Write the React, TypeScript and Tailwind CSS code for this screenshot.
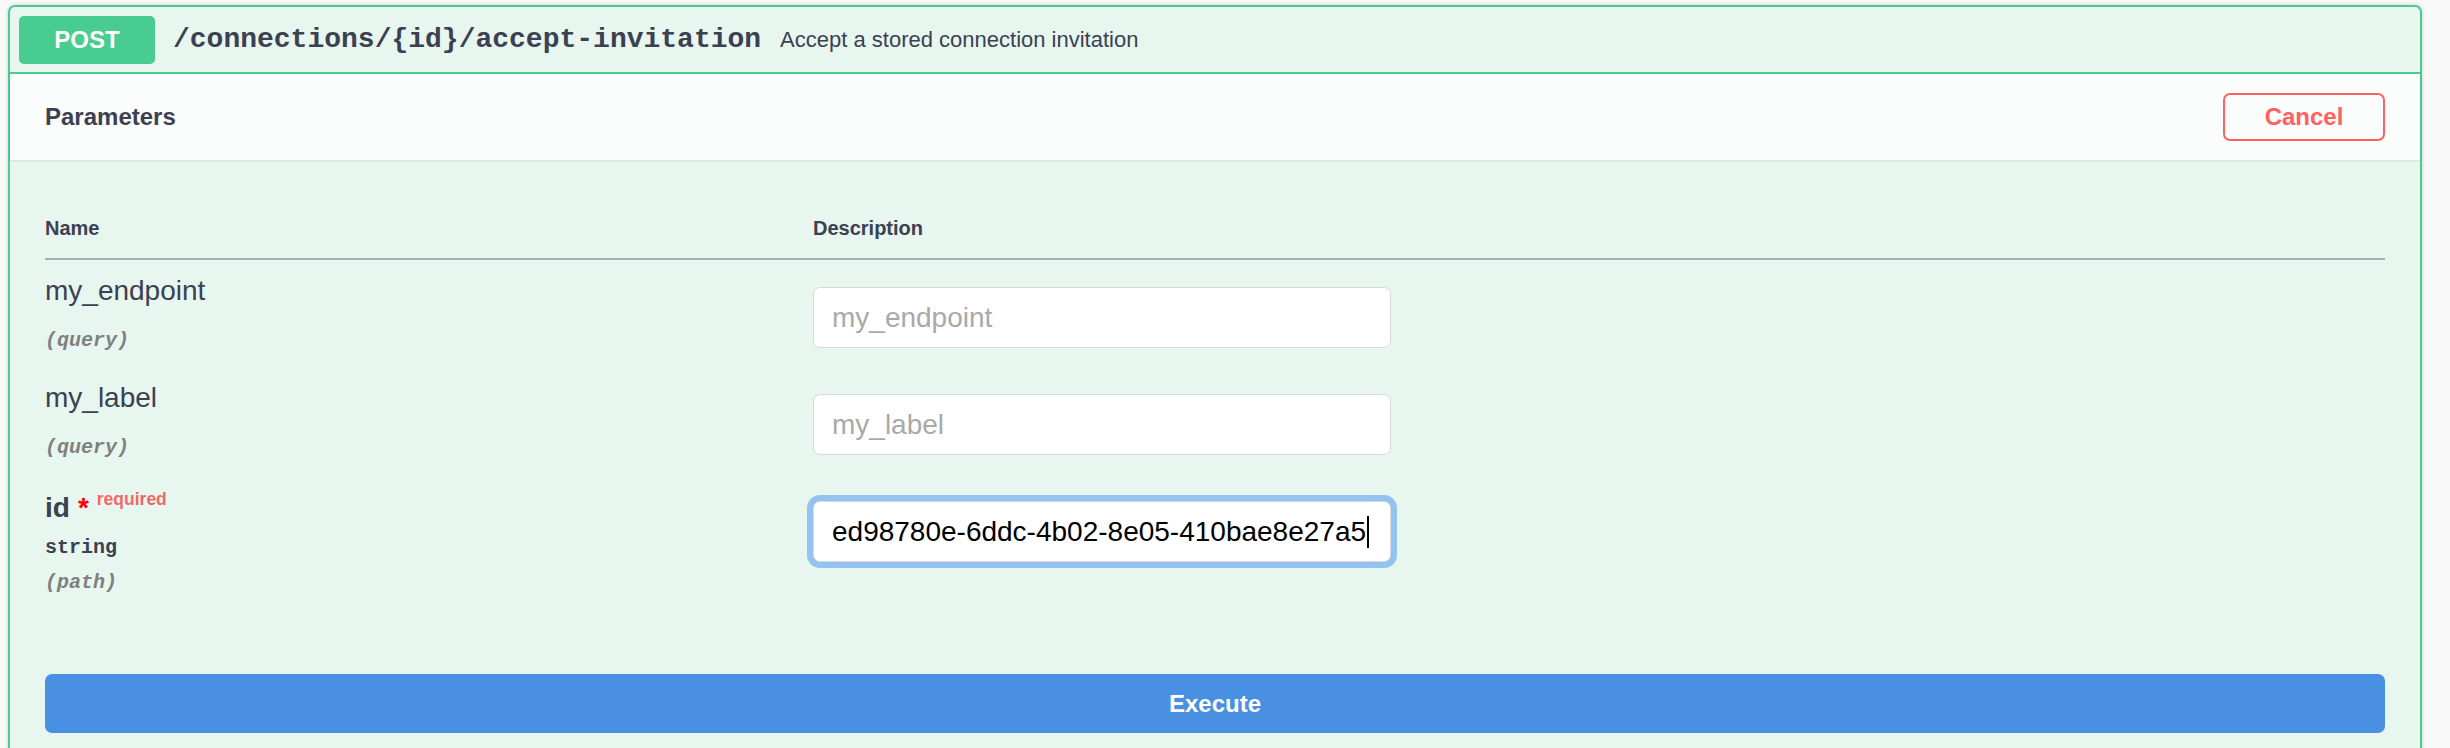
import React from 'react';

interface Param {
  name: string;
  location: string;
  type?: string;
  required?: boolean;
  value?: string;
}

const params: Param[] = [
  { name: 'my_endpoint', location: 'query' },
  { name: 'my_label', location: 'query' },
  { name: 'id', location: 'path', type: 'string', required: true, value: 'ed98780e-6ddc-4b02-8e05-410bae8e27a5' },
];

const mono = "font-['Liberation_Mono','Courier_New',monospace]";

const ParamRow: React.FC<{ param: Param }> = ({ param }) => {
  return (
    <div className="grid grid-cols-[768px_1fr] pt-[15px] pb-[15px]">
      <div className="flex flex-col">
        <div className={`text-[28px] leading-[32px] ${param.required ? 'mt-[3px] font-bold' : ''}`}>
          {param.name}
          {param.required && (
            <>
              <span className="ml-[8px] text-[#ff0000]">*</span>
              <span className="relative -top-[12px] pl-[8px] text-[17.5px] font-bold text-[rgba(255,0,0,0.6)]">
                required
              </span>
            </>
          )}
        </div>
        {param.type && (
          <div className={`${mono} mt-[9px] text-[20px] leading-[23px] font-bold`}>{param.type}</div>
        )}
        <div
          className={`${mono} text-[20px] leading-[23px] font-bold italic text-[#808080] ${
            param.type ? 'mt-[12px]' : 'mt-[22px]'
          }`}
        >
          ({param.location})
        </div>
      </div>
      <div className="pt-[12px]">
        {param.value ? (
          <div className="flex h-[61px] w-[578px] items-center rounded-[7px] border border-[#d9d9d9] bg-white pl-[18px] text-[28px] text-black shadow-[0_0_0_6px_#93c4f0]">
            <span>{param.value}</span>
            <span className="ml-[1px] h-[32px] w-[1.5px] bg-black" />
          </div>
        ) : (
          <input
            placeholder={param.name}
            className="h-[61px] w-[578px] rounded-[7px] border border-[#d9d9d9] bg-white pl-[18px] text-[28px] text-black outline-none placeholder:text-[#a9a9a9]"
          />
        )}
      </div>
    </div>
  );
};

export default function App() {
  return (
    <div className="h-[748px] overflow-hidden bg-[#f9f9f9] font-['Liberation_Sans',Arial,sans-serif] text-[#3b4151]">
      <div className="ml-[8px] mt-[5px] w-[2414px] rounded-t-[7px] border-2 border-b-0 border-[#49cc90] bg-[#e8f6f0] shadow-[0_0_4px_rgba(0,0,0,0.19)]">
        {/* summary */}
        <div className="flex h-[67px] items-center border-b-2 border-[#49cc90] pl-[9px]">
          <span className="flex h-[48px] w-[136px] items-center justify-center rounded-[5px] bg-[#49cc90] text-[24px] font-bold text-white">
            POST
          </span>
          <span className={`${mono} ml-[18px] text-[28px] font-bold`}>/connections/{'{id}'}/accept-invitation</span>
          <span className="ml-[19px] text-[22px]">Accept a stored connection invitation</span>
        </div>

        {/* section header */}
        <div className="flex h-[86px] items-center justify-between bg-[#fafdfc] px-[35px] shadow-[0_1px_2px_rgba(0,0,0,0.1)]">
          <h4 className="text-[24px] font-bold">Parameters</h4>
          <button className="h-[48px] w-[162px] rounded-[7px] border-2 border-[#ff6060] text-[24px] font-bold text-[#ff6060]">
            Cancel
          </button>
        </div>

        {/* parameters table */}
        <div className="px-[35px] pt-[57px] pb-[35px]">
          <div className="grid grid-cols-[768px_1fr] border-b-2 border-[#a9aeae] pb-[18px] text-[20px] leading-[23px] font-bold">
            <div>Name</div>
            <div>Description</div>
          </div>
          {params.map((p) => (
            <ParamRow key={p.name} param={p} />
          ))}
          <button className="mt-[65px] h-[59px] w-full rounded-[7px] bg-[#4990e2] text-[24px] font-bold text-white">
            Execute
          </button>
        </div>
      </div>
    </div>
  );
}
